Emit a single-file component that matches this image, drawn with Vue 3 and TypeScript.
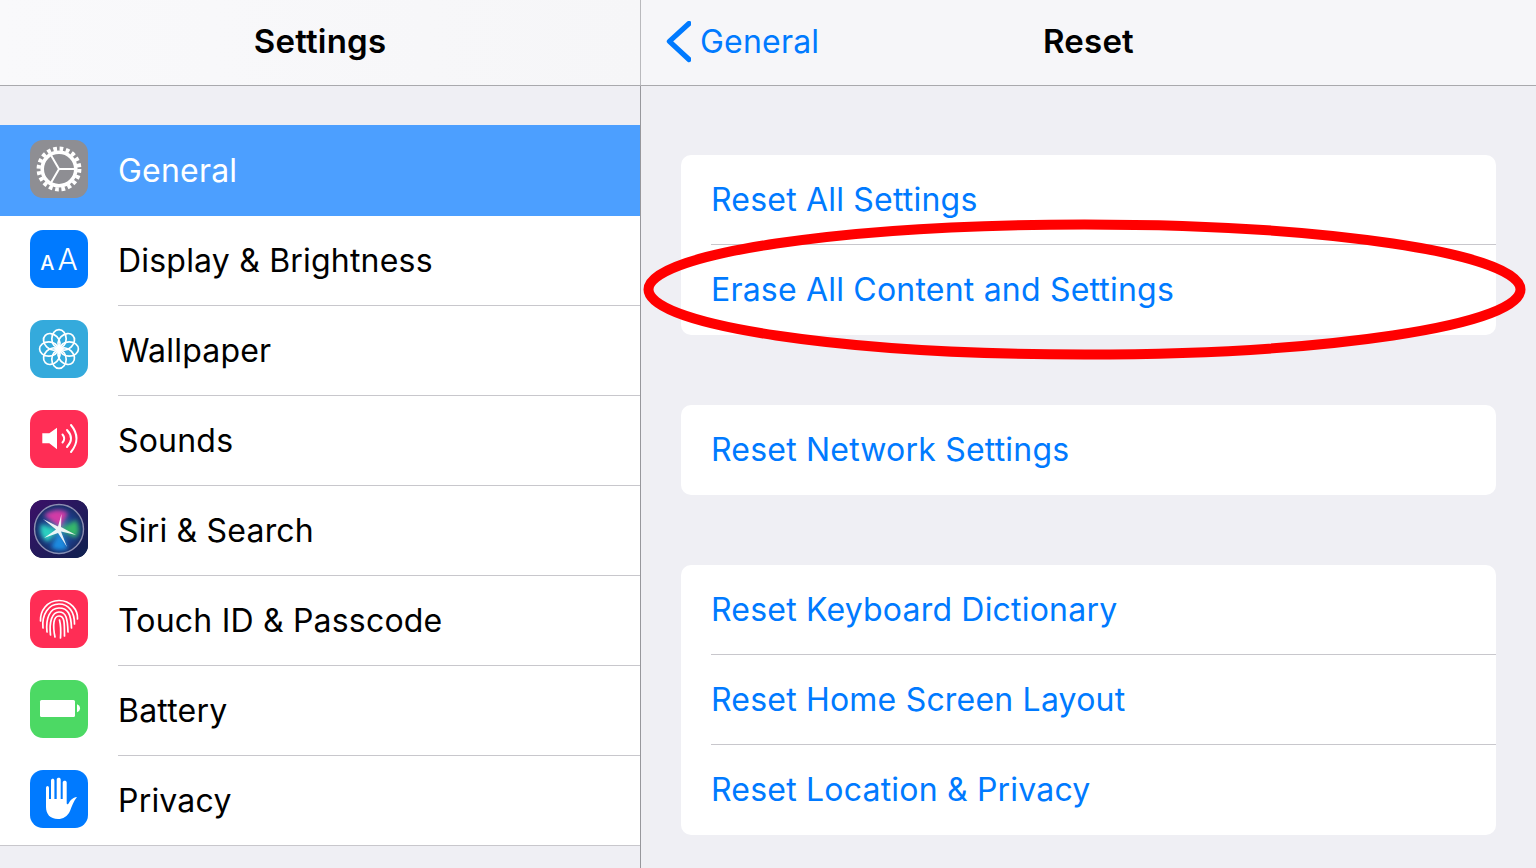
<script setup lang="ts">
interface Row { label: string; icon: string; bg: string; active?: boolean }
const rows: Row[] = [
  { label: 'General', icon: 'gear', bg: '#8e8e93', active: true },
  { label: 'Display & Brightness', icon: 'aa', bg: '#007aff' },
  { label: 'Wallpaper', icon: 'flower', bg: '#34aadc' },
  { label: 'Sounds', icon: 'sound', bg: '#ff2d55' },
  { label: 'Siri & Search', icon: 'siri', bg: '#1b1f4b' },
  { label: 'Touch ID & Passcode', icon: 'finger', bg: '#ff2d55' },
  { label: 'Battery', icon: 'battery', bg: '#4cd964' },
  { label: 'Privacy', icon: 'hand', bg: '#007aff' }
]
const groups: string[][] = [
  ['Reset All Settings', 'Erase All Content and Settings'],
  ['Reset Network Settings'],
  ['Reset Keyboard Dictionary', 'Reset Home Screen Layout', 'Reset Location & Privacy']
]
const petals = [0, 45, 90, 135, 180, 225, 270, 315]
</script>

<template>
  <div class="page">
    <aside class="side">
      <header class="bar side-bar"><h1 class="title">Settings</h1></header>
      <ul class="list">
        <li v-for="row in rows" :key="row.label" class="row" :class="{ active: row.active }">
          <span class="icon" :style="{ background: row.bg }">
            <svg viewBox="0 0 58 58" width="58" height="58" fill="none" stroke="#fff" stroke-linecap="round">
              <g v-if="row.icon === 'gear'">
                <circle cx="29" cy="29" r="20.300" stroke-width="4.200" stroke-dasharray="3.700 2.677" stroke-linecap="butt" />
                <circle cx="29" cy="29" r="16.800" stroke-width="3.600" />
                <path d="M29 29H45M29 29L21 15.200M29 29L21 42.800" stroke-width="2" />
              </g>
              <g v-else-if="row.icon === 'aa'" />
              <g v-else-if="row.icon === 'flower'" stroke-width="1.700">
                <ellipse v-for="a in petals" :key="a" cx="29" cy="18.800" rx="7.200" ry="9.200" :transform="`rotate(${a} 29 29)`" />
                <circle cx="29" cy="29" r="3.300" fill="#fff" stroke="none" />
              </g>
              <g v-else-if="row.icon === 'sound'">
                <path d="M12.300 23.300H19.300L27 17.700V39.300L19.300 33.300H12.300Z" fill="#fff" stroke="none" />
                <path d="M32.500 24.500Q36 28.500 32.500 32.500M37 20Q45 28.500 37 37M41 15Q52 28.500 41 42" stroke-width="2" />
              </g>
              <g v-else-if="row.icon === 'siri'" stroke="none">
                <defs>
                  <linearGradient id="siribg" x1="0" y1="0" x2="1" y2="1">
                    <stop offset="0" stop-color="#3c1068" />
                    <stop offset="1" stop-color="#0e2250" />
                  </linearGradient>
                  <radialGradient id="siriglow" cx="0.5" cy="0.5" r="0.5">
                    <stop offset="0" stop-color="#2f8fb0" />
                    <stop offset="0.7" stop-color="#1b3c86" />
                    <stop offset="1" stop-color="#1a2c66" />
                  </radialGradient>
                  <filter id="siriblur" x="-20%" y="-20%" width="140%" height="140%">
                    <feGaussianBlur stdDeviation="2.200" />
                  </filter>
                  <filter id="siristar" x="-20%" y="-20%" width="140%" height="140%">
                    <feGaussianBlur stdDeviation="0.700" />
                  </filter>
                </defs>
                <rect width="58" height="58" fill="url(#siribg)" />
                <circle cx="29" cy="29" r="24.500" fill="url(#siriglow)" stroke="#8d8fb2" stroke-width="1.400" />
                <g filter="url(#siriblur)">
                  <path d="M30 28L14 15Q28 6 38 13Z" fill="#d23ba6" />
                  <path d="M31 29L46 20Q52 32 45 38Z" fill="#35b76b" />
                  <path d="M27 30L11 24Q8 36 18 42Z" fill="#2bd0c0" />
                  <path d="M30 31L38 49Q26 52 21 47Z" fill="#1f8be0" />
                </g>
                <path d="M31.500 14L31 27L46 35L31 31.500L37 47L28 33L14 38L26 29.500L13 19L28 26.500Z" fill="#fff" filter="url(#siristar)" opacity=".9" />
              </g>
              <g v-else-if="row.icon === 'finger'" stroke-width="1.700">
                <path d="M10.500 31C10 21 17 10.500 29 10.500S48 20 47.500 29" />
                <path d="M13 38C11.500 24 19 14 29 14S44.500 22 44.500 34" />
                <path d="M17 42C15.500 28 20 18 29 18S41 24 41.500 38" />
                <path d="M20.500 45C19 32 22 22 29 22S37.500 28 38 42" />
                <path d="M25 47C22.500 35 23.500 26 29 26S34.500 32 34.500 46" />
                <path d="M29.500 30C31 36 31 41 30.500 48" />
              </g>
              <g v-else-if="row.icon === 'battery'" stroke="none">
                <rect x="10" y="20" width="35" height="17" rx="1.500" fill="#fff" />
                <path d="M47 24.300C49 25 50 26.500 50 28.300S49 31.600 47 32.300Z" fill="#fff" />
              </g>
              <g v-else-if="row.icon === 'hand'" stroke="none">
                <path d="M16 18C16 15.300 19 15.300 19 18V29H21V10.800C21 8.200 24.400 8.200 24.400 10.800V29H26.700V9.800C26.700 7.200 30.700 7.200 30.700 9.800V29H32.700V12.500C32.700 10 36.700 10 36.700 12.500V33C36.700 34.500 37.800 34.600 38.600 33.400C40.500 30 42.500 27.800 47 27C43.500 31 42 36 40 41C37.500 46.500 33 49 28 49C20 49 16 44 16 37Z" fill="#fff" />
              </g>
            </svg>
            <span v-if="row.icon === 'aa'" class="aa"><span class="a-small">A</span><span class="a-big">A</span></span>
          </span>
          <span class="row-body"><span class="label">{{ row.label }}</span></span>
        </li>
      </ul>
    </aside>
    <main class="detail">
      <header class="bar detail-bar">
        <div class="back">
          <svg class="chev" viewBox="0 0 26 44" width="26" height="44" fill="none">
            <path d="M24 2.500L4.400 20.300L24 38.500" stroke="#007aff" stroke-width="5.200" stroke-linecap="round" stroke-linejoin="round" />
          </svg>
          <span class="back-text">General</span>
        </div>
        <h1 class="title">Reset</h1>
      </header>
      <div class="groups">
        <section v-for="(group, i) in groups" :key="i" class="card">
          <div v-for="item in group" :key="item" class="action"><span class="action-text">{{ item }}</span></div>
        </section>
      </div>
    </main>
    <svg class="ring" viewBox="0 0 1536 868" width="1536" height="868" fill="none">
      <ellipse cx="1084.500" cy="289.500" rx="436" ry="65" stroke="#ff0000" stroke-width="10" />
    </svg>
  </div>
</template>

<style>
html, body { margin: 0; padding: 0; background: #efeff4; }
</style>

<style scoped>
.page {
  position: relative;
  display: flex;
  width: 1536px;
  height: 868px;
  overflow: hidden;
  background: #efeff4;
  font-family: Inter, "Liberation Sans", sans-serif;
  color: #000;
  letter-spacing: 0.2px;
}
.side {
  flex: 0 0 640px;
  border-right: 1px solid #97979c;
}
.bar {
  height: 81px;
  padding-bottom: 4px;
  border-bottom: 1px solid #a9a9ad;
  background: #f6f6f9;
  display: flex;
  align-items: center;
  justify-content: center;
  position: relative;
}
.side-bar {
  background: linear-gradient(90deg, #f9f9fb, #f6f6f8);
}
.title {
  margin: 0;
  font-size: 33px;
  font-weight: 600;
  letter-spacing: 0.2px;
}
.list {
  list-style: none;
  margin: 39px 0 0;
  padding: 0;
  background: #fff;
}
.row {
  height: 90px;
  display: flex;
  align-items: center;
  padding-left: 30px;
}
.row.active {
  background: #4c9fff;
  color: #fff;
  height: 91px;
}
.row:last-child {
  box-sizing: border-box;
  border-bottom: 1px solid #c8c7cc;
}
.icon {
  position: relative;
  flex: none;
  width: 58px;
  height: 58px;
  border-radius: 13px;
  overflow: hidden;
  margin-right: 30px;
  margin-bottom: 4px;
}
.icon svg { display: block; }
.aa {
  position: absolute;
  inset: 0;
  display: flex;
  align-items: baseline;
  justify-content: center;
  color: #fff;
  line-height: 58px;
  gap: 3px;
  letter-spacing: 0;
}
.a-small { font-size: 20px; font-weight: 500; }
.a-big { font-size: 30px; font-weight: 300; }
.row-body {
  flex: 1;
  align-self: stretch;
  display: flex;
  align-items: center;
  box-sizing: border-box;
  border-bottom: 1px solid #c8c7cc;
}
.row.active .row-body, .row:last-child .row-body { border-bottom: 0; }
.label {
  font-size: 32px;
  font-weight: 400;
}
.detail { flex: 1; min-width: 0; }
.detail-bar {
  margin-left: -1px;
  border-left: 1px solid #b9b9bd;
}
.back {
  position: absolute;
  left: 24px;
  top: 0;
  height: 85px;
  display: flex;
  align-items: center;
  color: #007aff;
}
.back-text { font-size: 32px; margin-left: 9px; padding-bottom: 3px; }
.chev { display: block; }
.groups {
  padding: 69px 40px 0;
  display: flex;
  flex-direction: column;
  gap: 70px;
}
.card {
  background: #fff;
  border-radius: 10px;
}
.action {
  height: 90px;
  margin-left: 30px;
  display: flex;
  align-items: center;
  box-sizing: border-box;
  border-bottom: 1px solid #c8c7cc;
}
.action:last-child { border-bottom-color: transparent; }
.action-text { font-size: 32px; color: #007aff; }
.ring {
  position: absolute;
  left: 0;
  top: 0;
  pointer-events: none;
}
</style>
